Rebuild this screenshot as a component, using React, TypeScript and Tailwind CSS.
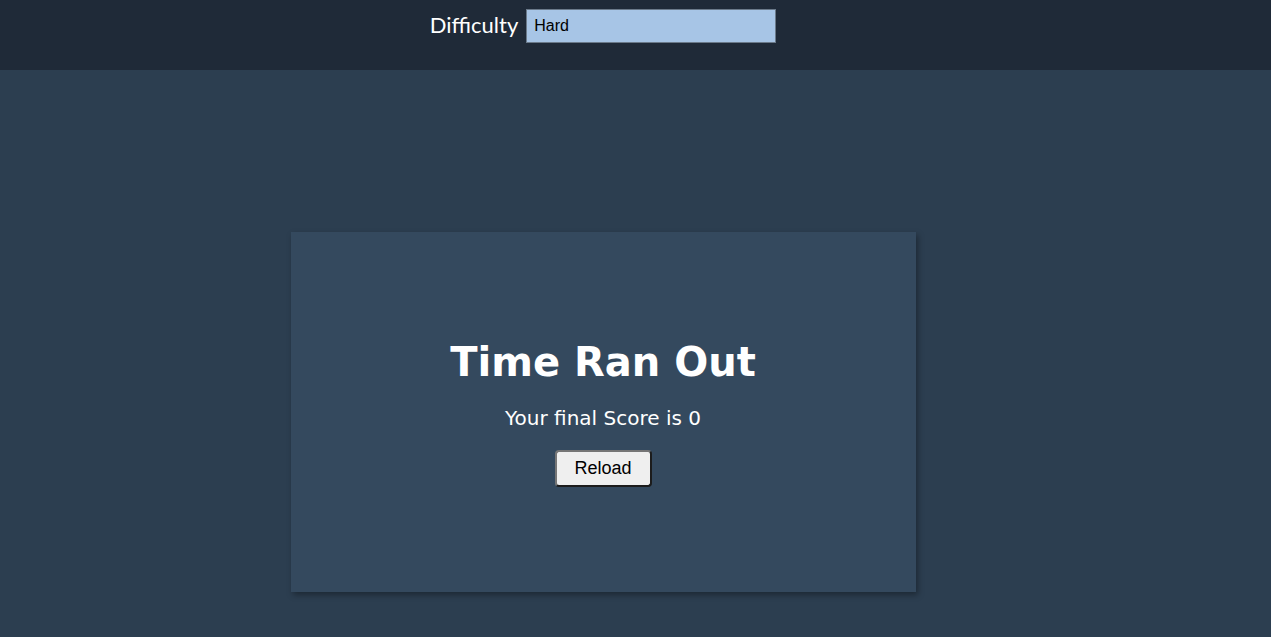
import React from 'react';

export default function App() {
  return (
    <div className="min-h-screen w-full bg-[#2c3e50] flex flex-col">
      <header className="h-[70px] bg-[#1f2a38] flex justify-center pr-[65px]">
        <div className="flex items-start gap-2 pt-[9px]">
          <label
            htmlFor="difficulty"
            className="text-white text-[22px] leading-[31px] font-['Lato',sans-serif]"
          >
            Difficulty
          </label>
          <input
            id="difficulty"
            defaultValue="Hard"
            className="w-[250px] h-[34px] bg-[#a7c5e6] border border-[#6b7a8a] px-[7px] text-[16px] text-black font-['Liberation_Sans',Arial,sans-serif] outline-none"
          />
        </div>
      </header>

      <main className="flex justify-center pr-[65px] pt-[162px]">
        <div className="w-[625px] h-[360px] bg-[#34495e] shadow-[2px_3px_6px_rgba(0,0,0,0.35)] flex flex-col items-center justify-center text-white">
          <h1 className="text-[40px] leading-none font-bold font-['DejaVu_Sans',Verdana,sans-serif] mt-[4px]">
            Time Ran Out
          </h1>
          <p className="mt-[26px] text-[20px] leading-none font-['DejaVu_Sans',Verdana,sans-serif]">
            Your final Score is 0
          </p>
          <button className="mt-[22px] w-[97px] h-[37px] bg-[#efefef] text-black text-[18px] font-['Liberation_Sans',Arial,sans-serif] border-2 border-[#1c1c1c] rounded-[4px] border-t-[#767676] border-l-[#767676]">
            Reload
          </button>
        </div>
      </main>
    </div>
  );
}
